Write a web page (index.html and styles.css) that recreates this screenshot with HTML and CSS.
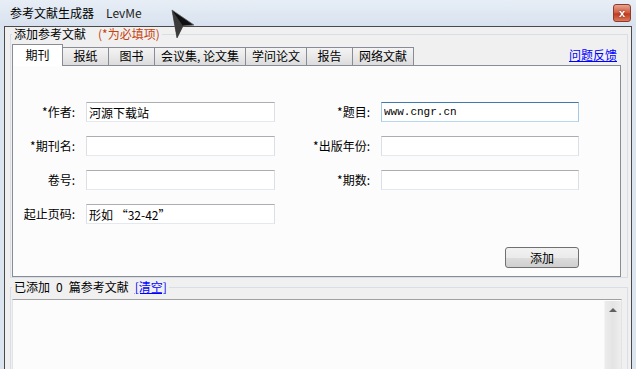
FILE: index.html
```html
<!DOCTYPE html>
<html lang="zh-CN">

<head>
	<meta charset="utf-8">
	<title>参考文献生成器 LevMe</title>
	<link rel="stylesheet" href="styles.css">
</head>

<body>
	<div class="window">
		<div class="titlebar">
			<span class="title">参考文献生成器</span>
			<span class="app-name">LevMe</span>
			<button type="button" class="close">x</button>
		</div>

		<div class="client">
			<fieldset class="group group-add">
				<legend>添加参考文献<span class="required-note">(*为必填项)</span></legend>

				<div class="tab-row">
					<ul class="tabs">
						<li class="tab active">期刊</li>
						<li class="tab">报纸</li>
						<li class="tab">图书</li>
						<li class="tab">会议集, 论文集</li>
						<li class="tab">学问论文</li>
						<li class="tab">报告</li>
						<li class="tab">网络文献</li>
					</ul>
					<a href="#" class="link feedback">问题反馈</a>
				</div>

				<div class="tab-panel">
					<form class="ref-form">
						<div class="fields">
							<label class="field-label" for="author">*作者:</label>
							<input type="text" id="author" class="text-input" value="河源下载站">
							<label class="field-label" for="title">*题目:</label>
							<input type="text" id="title" class="text-input focused latin" value="www.cngr.cn">

							<label class="field-label" for="journal">*期刊名:</label>
							<input type="text" id="journal" class="text-input">
							<label class="field-label" for="year">*出版年份:</label>
							<input type="text" id="year" class="text-input">

							<label class="field-label" for="volume">卷号:</label>
							<input type="text" id="volume" class="text-input">
							<label class="field-label" for="issue">*期数:</label>
							<input type="text" id="issue" class="text-input">

							<label class="field-label" for="pages">起止页码:</label>
							<input type="text" id="pages" class="text-input" value="形如 “32-42”">
						</div>
						<div class="actions">
							<button type="button" class="btn">添加</button>
						</div>
					</form>
				</div>
			</fieldset>

			<fieldset class="group group-list">
				<legend>已添加&ensp;0&ensp;篇参考文献&ensp;<a href="#" class="link">[清空]</a></legend>
				<div class="list-box">
					<div class="scrollbar"><span class="arrow-up"></span></div>
				</div>
			</fieldset>
		</div>
	</div>

	<!-- mouse pointer over the title bar -->
	<svg class="cursor" width="32" height="34" viewBox="0 0 32 34">
		<polygon points="4,2 26,17 15,18 9,30" fill="#101010" stroke="#6a6a6a" stroke-width="0.8" />
		<polygon points="4,2 15,18 9,30" fill="#3a3a3a" />
	</svg>
</body>

</html>
```

FILE: styles.css
```css
* {
	box-sizing: border-box;
}

body,
html {
	height: 100%;
	overflow: hidden;
	padding: 0;
	margin: 0;
}

body {
	position: relative;
	background-color: #dbe5f0;
	font-family: "Noto Sans CJK SC", "Noto Sans", sans-serif;
	font-size: 12px;
	color: #000000;
}

/* title bar */
.titlebar {
	display: flex;
	align-items: center;
	height: 26px;
	padding-left: 10px;
	background: linear-gradient(#e7eef6, #d8e2ee);
	line-height: 14px;
}

.app-name {
	margin-left: 12px;
	color: #1e1e1e;
}

.close {
	margin-left: auto;
	margin-right: 5px;
	width: 18px;
	height: 18px;
	padding: 0;
	border: 1px solid #8e3b2c;
	border-radius: 3px;
	background: linear-gradient(#e7a491, #d0583c 50%, #c0391f 55%, #dc7a5c);
	color: #ffffff;
	font-family: "Liberation Sans", sans-serif;
	font-weight: bold;
	font-size: 11px;
	line-height: 14px;
	text-shadow: 0 0 2px #5a1a0c;
}

/* window client area */
.client {
	height: 343px;
	margin: 0 4px;
	border: 1px solid #4a4a4a;
	border-bottom: none;
	background-color: #f0f0f0;
}

.group {
	margin: 0 3px 0 5px;
	min-width: 0;
	border: 1px solid #d5dfe5;
}

.group legend {
	padding: 0 2px;
	line-height: 14px;
}

.group-add {
	padding: 3px 6px 0 1px;
}

.group-list {
	margin-top: 2px;
	padding: 5px 6px 0 1px;
}

.required-note {
	margin-left: 12px;
	color: #c8400c;
}

.link {
	color: #0000ff;
	text-decoration: underline;
}

/* tabs */
.tab-row {
	display: flex;
	align-items: flex-end;
	height: 21px;
}

.tabs {
	display: flex;
	align-items: flex-end;
	margin: 0;
	padding: 0;
	list-style: none;
}

.tab {
	min-width: 47px;
	height: 18px;
	margin-left: -1px;
	padding: 0 6px;
	border: 1px solid #898c95;
	border-bottom: none;
	background: linear-gradient(#f4f4f4, #e9e9e9 50%, #dcdcdc);
	text-align: center;
	line-height: 16px;
	white-space: nowrap;
}

.tab.active {
	position: relative;
	z-index: 1;
	width: 51px;
	height: 22px;
	margin-left: 0;
	margin-bottom: -1px;
	background: #ffffff;
	line-height: 20px;
}

.feedback {
	margin-left: auto;
	margin-right: 4px;
	align-self: center;
	line-height: 14px;
}

.tab-panel {
	width: 609px;
	height: 212px;
	border: 1px solid #898c95;
	background-color: #fcfcfc;
}

/* form */
.ref-form {
	width: 566px;
	padding-top: 36px;
}

.fields {
	display: grid;
	grid-template-columns: 73px 189px 106px 198px;
	grid-auto-rows: 20px;
	row-gap: 14px;
}

.field-label {
	padding-right: 11px;
	text-align: right;
	line-height: 20px;
	white-space: nowrap;
}

.text-input {
	width: 100%;
	height: 20px;
	margin: 0;
	padding: 0 2px;
	border: 1px solid;
	border-color: #abadb3 #dbdfe6 #e3e9ef #dbdfe6;
	background-color: #ffffff;
	font: inherit;
	color: #000000;
	outline: none;
}

.text-input.focused {
	border-color: #3d7bad #a4c9e3 #b7d9ed #a4c9e3;
}

.text-input.latin {
	font-family: "Liberation Mono", monospace;
	font-size: 11px;
}

.actions {
	display: flex;
	justify-content: flex-end;
	margin-top: 23px;
}

.btn {
	width: 74px;
	height: 21px;
	padding: 0;
	border: 1px solid #707070;
	border-radius: 3px;
	background: linear-gradient(#f2f2f2, #ebebeb 50%, #dddddd 51%, #cfcfcf);
	font: inherit;
	color: #000000;
}

/* added list */
.list-box {
	display: flex;
	justify-content: flex-end;
	width: 610px;
	height: 80px;
	padding-top: 1px;
	border: 1px solid #e3e3e3;
	border-top-color: #a0a0a0;
	background-color: #fcfcfc;
}

.scrollbar {
	display: flex;
	justify-content: center;
	width: 17px;
	padding-top: 7px;
	border-left: 1px solid #f4f4f4;
	background: linear-gradient(90deg, #ececec, #e4e4e4 50%, #eeeeee);
}

.arrow-up {
	width: 0;
	height: 0;
	border-left: 4px solid transparent;
	border-right: 4px solid transparent;
	border-bottom: 4px solid #606060;
}

.cursor {
	position: absolute;
	left: 168px;
	top: 8px;
}
```
